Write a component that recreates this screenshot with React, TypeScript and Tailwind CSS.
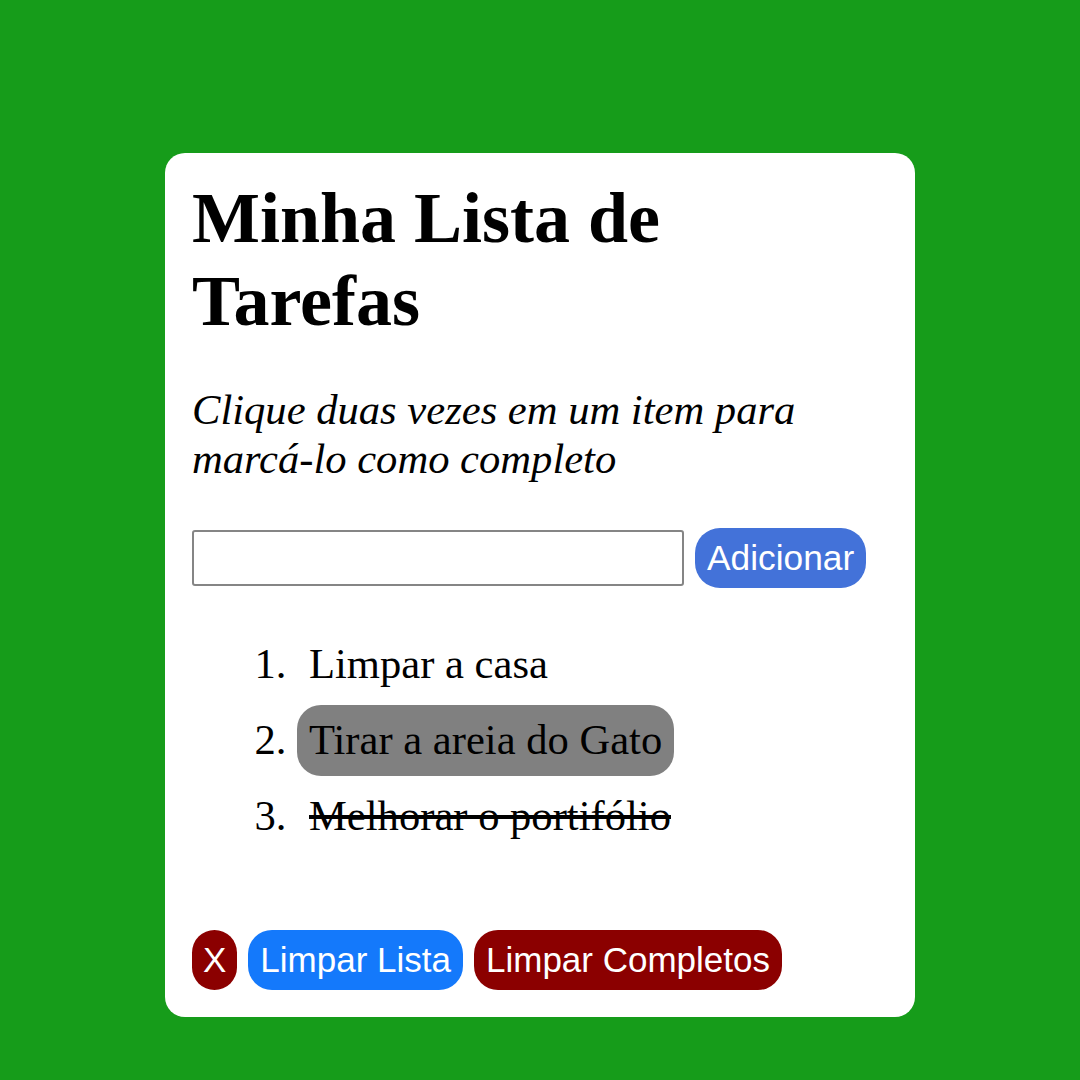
import { useState } from 'react';

interface Task {
  id: number;
  text: string;
  done: boolean;
}

const initialTasks: Task[] = [
  { id: 1, text: 'Limpar a casa', done: false },
  { id: 2, text: 'Tirar a areia do Gato', done: false },
  { id: 3, text: 'Melhorar o portifólio', done: true },
];

export default function App() {
  const [tasks, setTasks] = useState<Task[]>(initialTasks);
  const [value, setValue] = useState('');
  const [selected, setSelected] = useState<number | null>(2);

  function addTask() {
    if (!value.trim()) return;
    setTasks([...tasks, { id: Date.now(), text: value.trim(), done: false }]);
    setValue('');
  }

  function toggle(id: number) {
    setTasks(tasks.map((t) => (t.id === id ? { ...t, done: !t.done } : t)));
  }

  return (
    <div className="min-h-screen bg-[#169c1a] pt-[153px] pl-[165px]">
      <div
        className="w-[750px] h-[864px] bg-white rounded-[20px] pt-6 px-[27px] pb-[27px] text-black"
        style={{ fontFamily: '"Liberation Serif", serif' }}
      >
        <h1 className="text-[72px] font-bold leading-[1.149]">Minha Lista de Tarefas</h1>
        <p className="mt-[44px] text-[42.6px] italic leading-[1.13]">
          Clique duas vezes em um item para marcá-lo como completo
        </p>

        <div className="mt-[45px] flex items-center gap-[11px]">
          <input
            value={value}
            onChange={(e) => setValue(e.target.value)}
            className="w-[492px] h-[56px] border-2 border-[#858585] rounded-[3px] px-2 text-[30px] outline-none"
          />
          <button
            onClick={addTask}
            className="bg-[#4372d9] text-white text-[35.3px] leading-[1.149] px-3 py-[10px] rounded-[25px]"
            style={{ fontFamily: '"Liberation Sans", Arial, sans-serif' }}
          >
            Adicionar
          </button>
        </div>

        <ol className="mt-[41px] list-decimal pl-[105px] text-[42.6px] leading-[1.149] flex flex-col gap-[5px]">
          {tasks.map((t) => (
            <li
              key={t.id}
              onClick={() => setSelected(t.id)}
              onDoubleClick={() => toggle(t.id)}
            >
              <span
                className={`inline-block py-[11px] px-3 rounded-[24px] cursor-pointer ${
                  selected === t.id ? 'bg-[#808080]' : ''
                } ${t.done ? 'line-through' : ''}`}
              >
                {t.text}
              </span>
            </li>
          ))}
        </ol>

        <div
          className="mt-[78px] flex items-center gap-[11px] text-[35px] leading-[1.149] text-white"
          style={{ fontFamily: '"Liberation Sans", Arial, sans-serif' }}
        >
          <button className="bg-[#8b0000] px-[11px] py-[10px] rounded-[24px]">X</button>
          <button
            onClick={() => setTasks([])}
            className="bg-[#1479fb] px-3 py-[10px] rounded-[24px]"
          >
            Limpar Lista
          </button>
          <button
            onClick={() => setTasks(tasks.filter((t) => !t.done))}
            className="bg-[#8b0000] px-3 py-[10px] rounded-[24px]"
          >
            Limpar Completos
          </button>
        </div>
      </div>
    </div>
  );
}
